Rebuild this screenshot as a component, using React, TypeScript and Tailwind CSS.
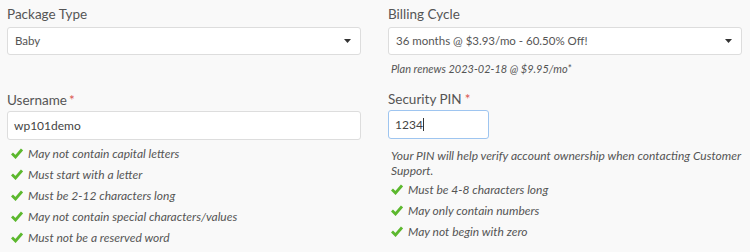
const usernameRules = [
  'May not contain capital letters',
  'Must start with a letter',
  'Must be 2-12 characters long',
  'May not contain special characters/values',
  'Must not be a reserved word',
];

const pinRules = ['Must be 4-8 characters long', 'May only contain numbers', 'May not begin with zero'];

function Rule({ text }: { text: string }) {
  return (
    <li className="flex items-center h-[21px]">
      <svg className="w-[12px] h-[11px] ml-[4px] mr-[5px] shrink-0" viewBox="0 0 12 11">
        <path d="M1 5.5 L4.5 9 L11 1.5" fill="none" stroke="#5cb82e" strokeWidth="2.8" />
      </svg>
      <span className="italic text-[12px] text-[#555]">{text}</span>
    </li>
  );
}

function Caret() {
  return (
    <svg className="w-[7px] h-[4px]" viewBox="0 0 7 4">
      <path d="M0 0 L7 0 L3.5 4 Z" fill="#333" />
    </svg>
  );
}

export default function App() {
  return (
    <div className="w-[750px] h-[252px] bg-[#f9f9f9] text-[#555] px-[7px] pt-[5px] font-['Lato',sans-serif] overflow-hidden">
      <div className="grid grid-cols-[354px_354px] gap-x-[27px]">
        {/* Left column */}
        <div>
          <label className="block text-[13.5px] text-[#555] h-[22px] leading-[18px]">Package Type</label>
          <div className="h-[28px] bg-white border border-[#ddd] rounded-[3px] flex items-center justify-between pl-[7px] pr-[9px]">
            <span className="text-[11.5px] text-[#555]">Baby</span>
            <Caret />
          </div>
          <label className="block mt-[36px] text-[13.5px] h-[20px] leading-[18px]">
            Username<span className="text-[#d9534f] ml-[2px]">*</span>
          </label>
          <div className="h-[29px] bg-white border border-[#ddd] rounded-[3px] flex items-center pl-[6px]">
            <span className="text-[12px] text-[#444]">wp101demo</span>
          </div>
          <ul className="mt-[3px]">
            {usernameRules.map((r) => (
              <Rule key={r} text={r} />
            ))}
          </ul>
        </div>

        {/* Right column */}
        <div>
          <label className="block text-[13.5px] h-[22px] leading-[18px]">Billing Cycle</label>
          <div className="h-[28px] bg-white border border-[#ddd] rounded-[3px] flex items-center justify-between pl-[7px] pr-[9px]">
            <span className="text-[11.5px] text-[#555]">36 months @ $3.93/mo - 60.50% Off!</span>
            <Caret />
          </div>
          <p className="italic text-[11px] text-[#555] mt-[7px] ml-[3px] leading-[14px]">Plan renews 2023-02-18 @ $9.95/mo*</p>
          <label className="block mt-[14px] text-[13.5px] h-[20px] leading-[18px]">
            Security PIN<span className="text-[#d9534f] ml-[3px]">*</span>
          </label>
          <div className="w-[101px] h-[29px] bg-white border border-[#9ec5f0] rounded-[3px] flex items-center pl-[6px]">
            <span className="text-[12px] text-[#444]">1234</span>
            <span className="w-px h-[13px] bg-[#333]" />
          </div>
          <p className="italic text-[12px] text-[#555] mt-[9px] ml-[3px] leading-[15px]">
            Your PIN will help verify account ownership when contacting Customer Support.
          </p>
          <ul className="mt-[1px] -ml-[1px]">
            {pinRules.map((r) => (
              <Rule key={r} text={r} />
            ))}
          </ul>
        </div>
      </div>
    </div>
  );
}
